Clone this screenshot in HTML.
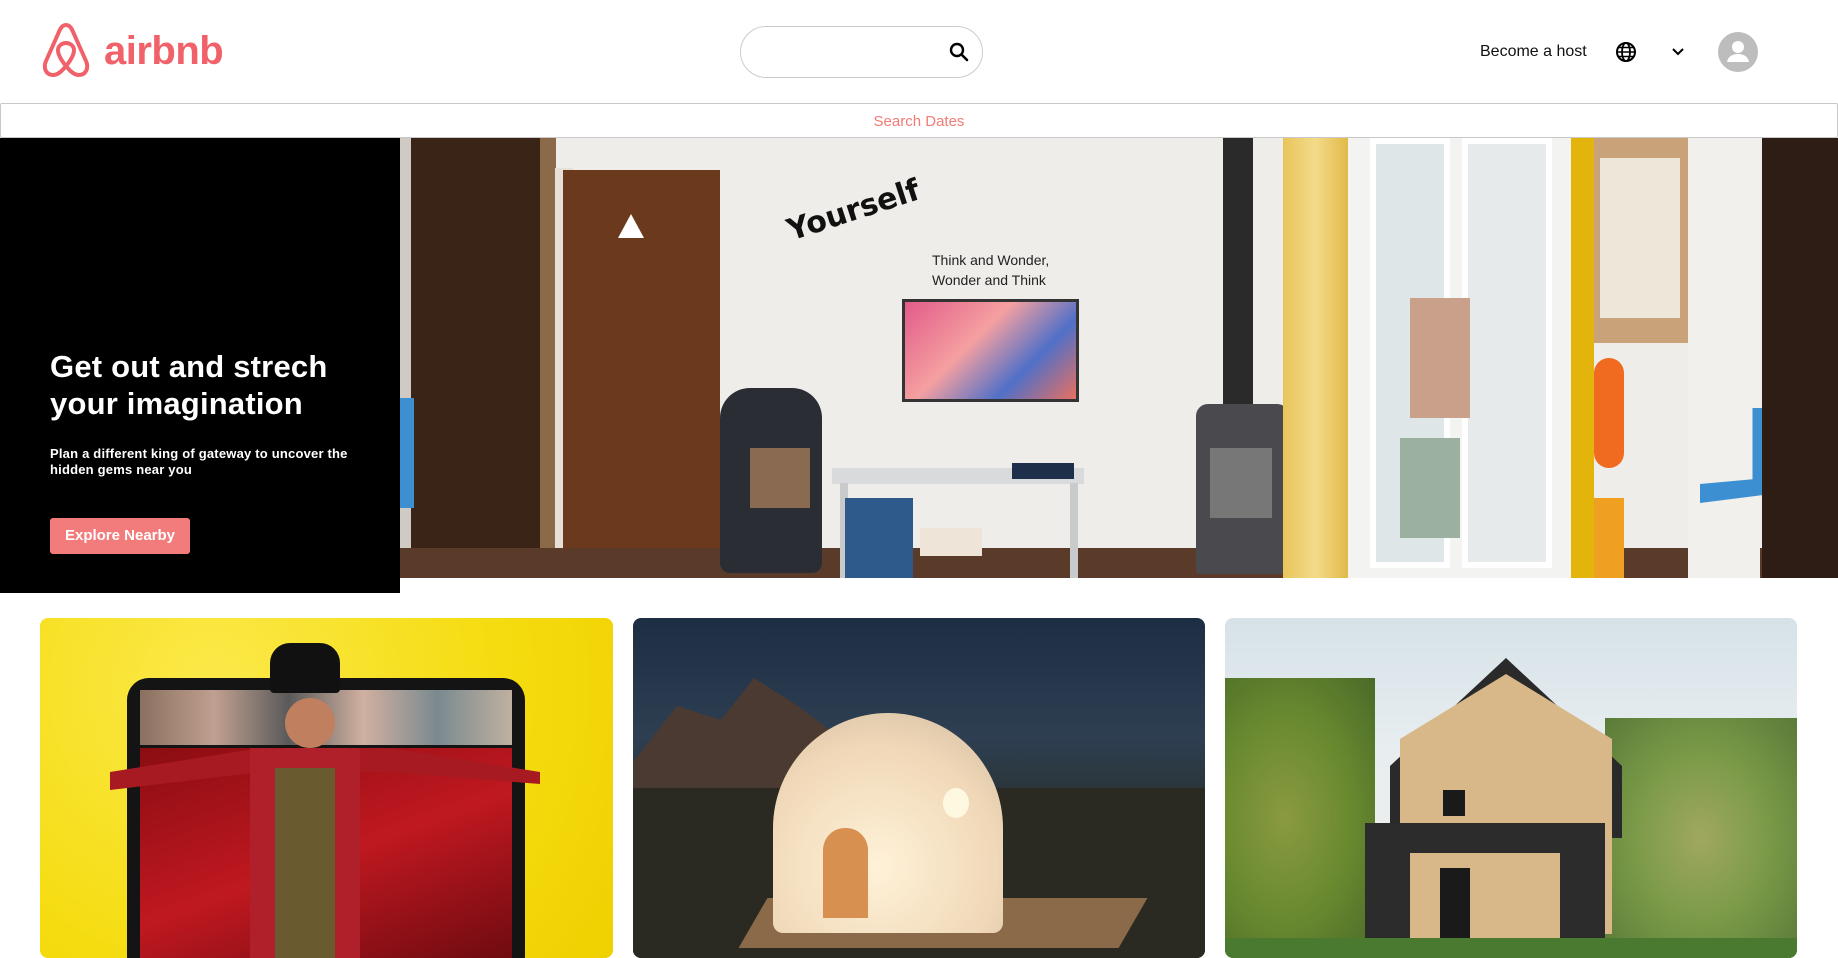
<!DOCTYPE html>
<html><head><meta charset="utf-8"><style>
*{margin:0;padding:0;box-sizing:border-box}
body{width:1838px;height:949px;overflow:hidden;background:#fff;font-family:"Liberation Sans",sans-serif;position:relative}
.a{position:absolute}
</style></head><body>
<!-- header -->
<svg class="a" style="left:41px;top:21px" width="50" height="58" viewBox="0 0 50 58"><path d="M25 4C21 4 19 8 17 13L5 40C2 47 5 54 12 54C17 54 21 50 25 45C29 50 33 54 38 54C45 54 48 47 45 40L33 13C31 8 29 4 25 4Z M25 45C20 39 17 33 17 29C17 25 21 22 25 22C29 22 33 25 33 29C33 33 30 39 25 45Z" fill="none" stroke="#f0616a" stroke-width="4" stroke-linejoin="round"/></svg>
<div class="a" style="left:104px;top:29px;font-size:40px;font-weight:bold;color:#f0616a;letter-spacing:-0.5px">airbnb</div>
<div class="a" style="left:740px;top:26px;width:243px;height:52px;border:1px solid #ccc;border-radius:26px"></div>
<svg class="a" style="left:949px;top:42px" width="20" height="20" viewBox="0 0 20 20"><circle cx="8" cy="8" r="6" fill="none" stroke="#000" stroke-width="2.4"/><path d="M12.5 12.5L18 18" stroke="#000" stroke-width="2.6" stroke-linecap="round"/></svg>
<div class="a" style="left:1480px;top:43px;font-size:16px;color:#111">Become a host</div>
<svg class="a" style="left:1615px;top:41px" width="22" height="22" viewBox="0 0 22 22"><circle cx="11" cy="11" r="9" fill="none" stroke="#000" stroke-width="2"/><ellipse cx="11" cy="11" rx="4" ry="9" fill="none" stroke="#000" stroke-width="1.8"/><path d="M2 11H20M3.5 6.5H18.5M3.5 15.5H18.5" stroke="#000" stroke-width="1.6"/></svg>
<svg class="a" style="left:1671px;top:46px" width="14" height="12" viewBox="0 0 14 12"><path d="M2 3L7 8L12 3" fill="none" stroke="#000" stroke-width="2"/></svg>
<svg class="a" style="left:1718px;top:32px" width="40" height="40" viewBox="0 0 40 40"><circle cx="20" cy="20" r="20" fill="#bdbdbd"/><circle cx="20" cy="15" r="6" fill="#fff"/><path d="M9 30C10 24 15 22 20 22C25 22 30 24 31 30Z" fill="#fff"/></svg>
<div class="a" style="left:0;top:103px;width:1838px;height:35px;border:1px solid #c8c8c8;border-radius:2px;text-align:center;font-size:15px;line-height:35px;color:#f27b76">Search Dates</div>
<!-- hero image -->
<div class="a" style="left:400px;top:138px;width:1438px;height:440px;background:#efede9;overflow:hidden">
 <div class="a" style="left:0;top:0;width:16px;height:440px;background:#cfcac4"></div>
 <div class="a" style="left:11px;top:0;width:140px;height:420px;background:#3a2418"></div>
 <div class="a" style="left:140px;top:0;width:16px;height:420px;background:#8a6a48"></div>
 <div class="a" style="left:155px;top:30px;width:18px;height:390px;background:#e7e0d8"></div>
 <div class="a" style="left:163px;top:32px;width:157px;height:385px;background:#6b3a1c"></div>
 <div class="a" style="left:0;top:410px;width:1438px;height:30px;background:#5a3a28"></div>
 <div class="a" style="left:0;top:260px;width:14px;height:110px;background:#3c8fd0"></div>
 <div class="a" style="left:218px;top:76px;width:26px;height:30px;background:#fff;clip-path:polygon(50% 0,100% 80%,0 80%)"></div>
 <div class="a" style="left:385px;top:55px;font-size:30px;font-weight:bold;color:#111;transform:rotate(-18deg);font-family:'DejaVu Sans',sans-serif">Yourself</div>
 <div class="a" style="left:532px;top:112px;font-size:14px;color:#222;line-height:20px">Think and Wonder,<br>Wonder and Think</div>
 <div class="a" style="left:502px;top:161px;width:177px;height:103px;background:linear-gradient(135deg,#e25b8a,#f5a0a0 40%,#5070c8 70%,#e87060);border:3px solid #333"></div>
 <div class="a" style="left:320px;top:250px;width:102px;height:185px;background:#2a2e34;border-radius:30px 30px 10px 10px"></div>
 <div class="a" style="left:350px;top:310px;width:60px;height:60px;background:#8a6a50"></div>
 <div class="a" style="left:432px;top:330px;width:252px;height:16px;background:#d8dadc"></div>
 <div class="a" style="left:440px;top:345px;width:8px;height:95px;background:#c8cacc"></div>
 <div class="a" style="left:670px;top:345px;width:8px;height:95px;background:#c8cacc"></div>
 <div class="a" style="left:445px;top:360px;width:68px;height:80px;background:#2d5a8a"></div>
 <div class="a" style="left:520px;top:390px;width:62px;height:28px;background:#eee4d8"></div>
 <div class="a" style="left:612px;top:325px;width:62px;height:16px;background:#1e2f4a"></div>
 <div class="a" style="left:823px;top:0;width:30px;height:270px;background:#2a2a2a"></div>
 <div class="a" style="left:796px;top:266px;width:93px;height:170px;background:#4a4a4e;border-radius:12px 12px 4px 4px"></div>
 <div class="a" style="left:810px;top:310px;width:62px;height:70px;background:#777"></div>
 <div class="a" style="left:883px;top:0;width:65px;height:440px;background:linear-gradient(90deg,#e9c45a,#f3db8a,#e2b948)"></div>
 <div class="a" style="left:948px;top:0;width:223px;height:440px;background:#f3f4f2"></div>
 <div class="a" style="left:970px;top:0;width:80px;height:430px;background:#dfe6e8;border:6px solid #fff"></div>
 <div class="a" style="left:1062px;top:0;width:90px;height:430px;background:#e6eaea;border:6px solid #fff"></div>
 <div class="a" style="left:1010px;top:160px;width:60px;height:120px;background:#c9a08a"></div>
 <div class="a" style="left:1000px;top:300px;width:60px;height:100px;background:#9cb0a0"></div>
 <div class="a" style="left:1171px;top:0;width:23px;height:440px;background:#e3b50c"></div>
 <div class="a" style="left:1194px;top:0;width:94px;height:205px;background:#c9a27a"></div>
 <div class="a" style="left:1200px;top:20px;width:80px;height:160px;background:#efe6da"></div>
 <div class="a" style="left:1194px;top:220px;width:30px;height:110px;background:#f06a20;border-radius:15px"></div>
 <div class="a" style="left:1194px;top:360px;width:30px;height:80px;background:#f0a020"></div>
 <div class="a" style="left:1288px;top:0;width:72px;height:440px;background:#f2f0ec"></div>
 <div class="a" style="left:1300px;top:270px;width:75px;height:95px;background:#3c8fd0;clip-path:polygon(70% 0,100% 0,100% 90%,0 100%,0 80%,70% 75%)"></div>
 <div class="a" style="left:1362px;top:0;width:76px;height:440px;background:#2e1d14"></div>
</div>
<!-- black panel -->
<div class="a" style="left:0;top:138px;width:400px;height:455px;background:#000"></div>
<div class="a" style="left:50px;top:348px;font-size:31px;font-weight:bold;color:#fff;line-height:37px;letter-spacing:0.2px">Get out and strech<br>your imagination</div>
<div class="a" style="left:50px;top:446px;font-size:13px;font-weight:bold;color:#fff;line-height:16px;letter-spacing:0.2px">Plan a different king of gateway to uncover the<br>hidden gems near you</div>
<div class="a" style="left:50px;top:518px;width:140px;height:36px;background:#f27b7b;border-radius:3px;color:#fff;font-size:15px;font-weight:bold;text-align:center;line-height:36px">Explore Nearby</div>
<!-- cards -->
<div class="a" style="left:40px;top:618px;width:573px;height:340px;border-radius:8px;overflow:hidden;background:radial-gradient(circle at 30% 20%,#fbe94a,#f5dc10 60%,#efd000)">
 <div class="a" style="left:87px;top:60px;width:398px;height:300px;background:#141414;border-radius:22px"></div>
 <div class="a" style="left:100px;top:72px;width:372px;height:55px;background:linear-gradient(90deg,#8a7060,#c0a090 20%,#5a5a5a 40%,#d0b0a0 60%,#7a8a90 80%,#c0b0a0)"></div>
 <div class="a" style="left:100px;top:130px;width:372px;height:220px;background:linear-gradient(160deg,#8a0d12,#c01820 50%,#6a0a10)"></div>
 <div class="a" style="left:230px;top:25px;width:70px;height:50px;background:#111;border-radius:20px 20px 4px 4px"></div>
 <div class="a" style="left:245px;top:80px;width:50px;height:50px;background:#c08060;border-radius:50%"></div>
 <div class="a" style="left:70px;top:130px;width:430px;height:60px;background:#a81a22;clip-path:polygon(0 40%,35% 0,65% 0,100% 40%,100% 60%,65% 40%,35% 40%,0 70%)"></div>
 <div class="a" style="left:210px;top:130px;width:110px;height:220px;background:#b0202a"></div>
 <div class="a" style="left:235px;top:150px;width:60px;height:200px;background:#6a5a30"></div>
</div>
<div class="a" style="left:633px;top:618px;width:572px;height:340px;border-radius:8px;overflow:hidden;background:linear-gradient(180deg,#1d2e44,#2e3f52 35%,#28302c 60%,#3a3628)">
 <div class="a" style="left:0;top:60px;width:220px;height:140px;background:#4a3a32;clip-path:polygon(0 60%,20% 20%,40% 30%,55% 0,75% 20%,100% 50%,100% 100%,0 100%)"></div>
 <div class="a" style="left:0;top:170px;width:572px;height:170px;background:#2a2a22"></div>
 <div class="a" style="left:120px;top:280px;width:380px;height:50px;background:#8a6a48;transform:skewX(-30deg)"></div>
 <div class="a" style="left:140px;top:95px;width:230px;height:220px;background:radial-gradient(circle at 45% 70%,#fff2d8,#f0d8b8 60%,#d0b8a0);border-radius:115px 115px 10px 10px"></div>
 <div class="a" style="left:190px;top:210px;width:45px;height:90px;background:#d89050;border-radius:22px 22px 0 0"></div>
 <div class="a" style="left:310px;top:170px;width:26px;height:30px;background:#fff8e0;border-radius:50%"></div>
</div>
<div class="a" style="left:1225px;top:618px;width:572px;height:340px;border-radius:8px;overflow:hidden;background:linear-gradient(180deg,#d6e2e8,#e8eef0 40%,#f0f0ea)">
 <div class="a" style="left:0;top:60px;width:150px;height:280px;background:radial-gradient(ellipse at 40% 50%,#8a9a40,#6a8a30 50%,#4a6a28)"></div>
 <div class="a" style="left:380px;top:100px;width:192px;height:240px;background:radial-gradient(ellipse at 50% 50%,#a0a860,#7a9a48 50%,#5a7a38)"></div>
 <div class="a" style="left:165px;top:40px;width:232px;height:180px;background:#2a2a2a;clip-path:polygon(50% 0,100% 60%,100% 100%,0 100%,0 60%)"></div>
 <div class="a" style="left:175px;top:56px;width:212px;height:260px;background:#d8b888;clip-path:polygon(50% 0,100% 25%,100% 100%,0 100%,0 25%)"></div>
 <div class="a" style="left:140px;top:205px;width:240px;height:140px;background:#2c2c2c"></div>
 <div class="a" style="left:185px;top:235px;width:150px;height:100px;background:#d8b888"></div>
 <div class="a" style="left:215px;top:250px;width:30px;height:90px;background:#1a1a1a"></div>
 <div class="a" style="left:218px;top:172px;width:22px;height:26px;background:#1a1a1a"></div>
 <div class="a" style="left:0;top:320px;width:572px;height:20px;background:#4a7a30"></div>
</div>
</body></html>
